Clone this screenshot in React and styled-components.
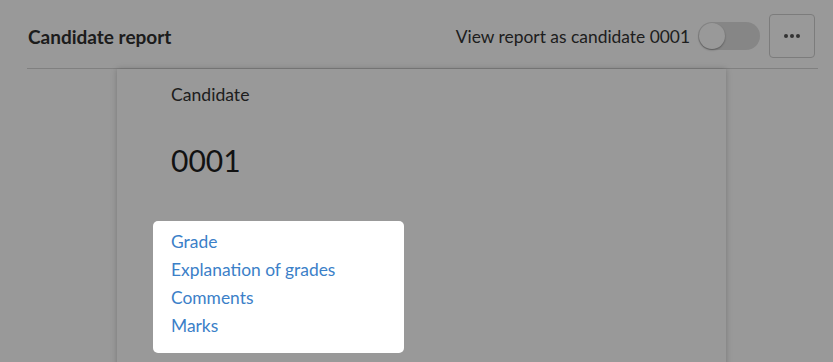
import React from "react";
import styled, { createGlobalStyle } from "styled-components";

const GlobalStyle = createGlobalStyle`
  html, body {
    margin: 0;
    padding: 0;
    background: #ffffff;
    font-family: Lato, "Noto Sans", sans-serif;
    color: #2b2b2b;
  }
`;

export const Page = styled.div`
  position: relative;
  width: 833px;
  height: 362px;
  overflow: hidden;
`;

export const Header = styled.header`
  display: flex;
  align-items: center;
  justify-content: space-between;
  height: 64px;
  margin: 0 15px 0 27px;
  padding: 4px 3px 0 1px;
  border-bottom: 1px solid #d6d6d6;
`;

export const Title = styled.h1`
  margin: 0;
  font-size: 19px;
  font-weight: 700;
  color: #303030;
`;

export const Actions = styled.div`
  display: flex;
  align-items: center;
`;

export const ToggleLabel = styled.span`
  font-size: 17.4px;
  color: #333;
  margin-right: 8px;
`;

export const Track = styled.div`
  display: flex;
  align-items: center;
  width: 62px;
  height: 28px;
  border-radius: 14px;
  background: #e0e0e0;
  margin-right: 9px;
  padding: 0 1px;
  box-sizing: border-box;
`;

export const Knob = styled.div`
  width: 26px;
  height: 26px;
  border-radius: 50%;
  background: #fff;
  box-shadow: 0 1px 2px rgba(0, 0, 0, 0.35);
`;

export const MoreButton = styled.button`
  display: flex;
  align-items: center;
  justify-content: center;
  gap: 2px;
  width: 46px;
  height: 44px;
  border: 1px solid #cfcfcf;
  border-radius: 4px;
  background: #fff;
  padding: 0;
`;

export const Dot = styled.span`
  width: 4px;
  height: 4px;
  border-radius: 50%;
  background: #555;
`;

export const Body = styled.main`
  display: flex;
  padding-left: 117px;
`;

export const Card = styled.section`
  width: 609px;
  height: 300px;
  background: #fff;
  box-shadow: 0 0 6px rgba(0, 0, 0, 0.22);
  padding: 14px 0 0 54px;
  box-sizing: border-box;
`;

export const Label = styled.div`
  font-size: 17.6px;
  line-height: 24px;
  color: #333;
`;

export const Number = styled.div`
  margin-top: 35px;
  font-size: 30px;
  line-height: 36px;
  color: #1f1f1f;
`;

export const Overlay = styled.div`
  position: absolute;
  inset: 0;
  background: rgba(0, 0, 0, 0.4);
`;

export const Menu = styled.nav`
  position: absolute;
  left: 153px;
  top: 221px;
  width: 251px;
  height: 132px;
  box-sizing: border-box;
  padding: 7px 18px 0;
  background: #fff;
  border-radius: 5px;
  display: flex;
  flex-direction: column;
`;

export const MenuLink = styled.a`
  font-size: 17.4px;
  line-height: 28px;
  color: #3b80c8;
  text-decoration: none;
`;

const links = ["Grade", "Explanation of grades", "Comments", "Marks"];

const App = () => {
  return (
    <Page>
      <GlobalStyle />
      <Header>
        <Title>Candidate report</Title>
        <Actions>
          <ToggleLabel>View report as candidate 0001</ToggleLabel>
          <Track>
            <Knob />
          </Track>
          <MoreButton aria-label="More">
            <Dot />
            <Dot />
            <Dot />
          </MoreButton>
        </Actions>
      </Header>
      <Body>
        <Card>
          <Label>Candidate</Label>
          <Number>0001</Number>
        </Card>
      </Body>
      <Overlay />
      <Menu>
        {links.map((l) => (
          <MenuLink key={l} href="#">
            {l}
          </MenuLink>
        ))}
      </Menu>
    </Page>
  );
};

export default App;
